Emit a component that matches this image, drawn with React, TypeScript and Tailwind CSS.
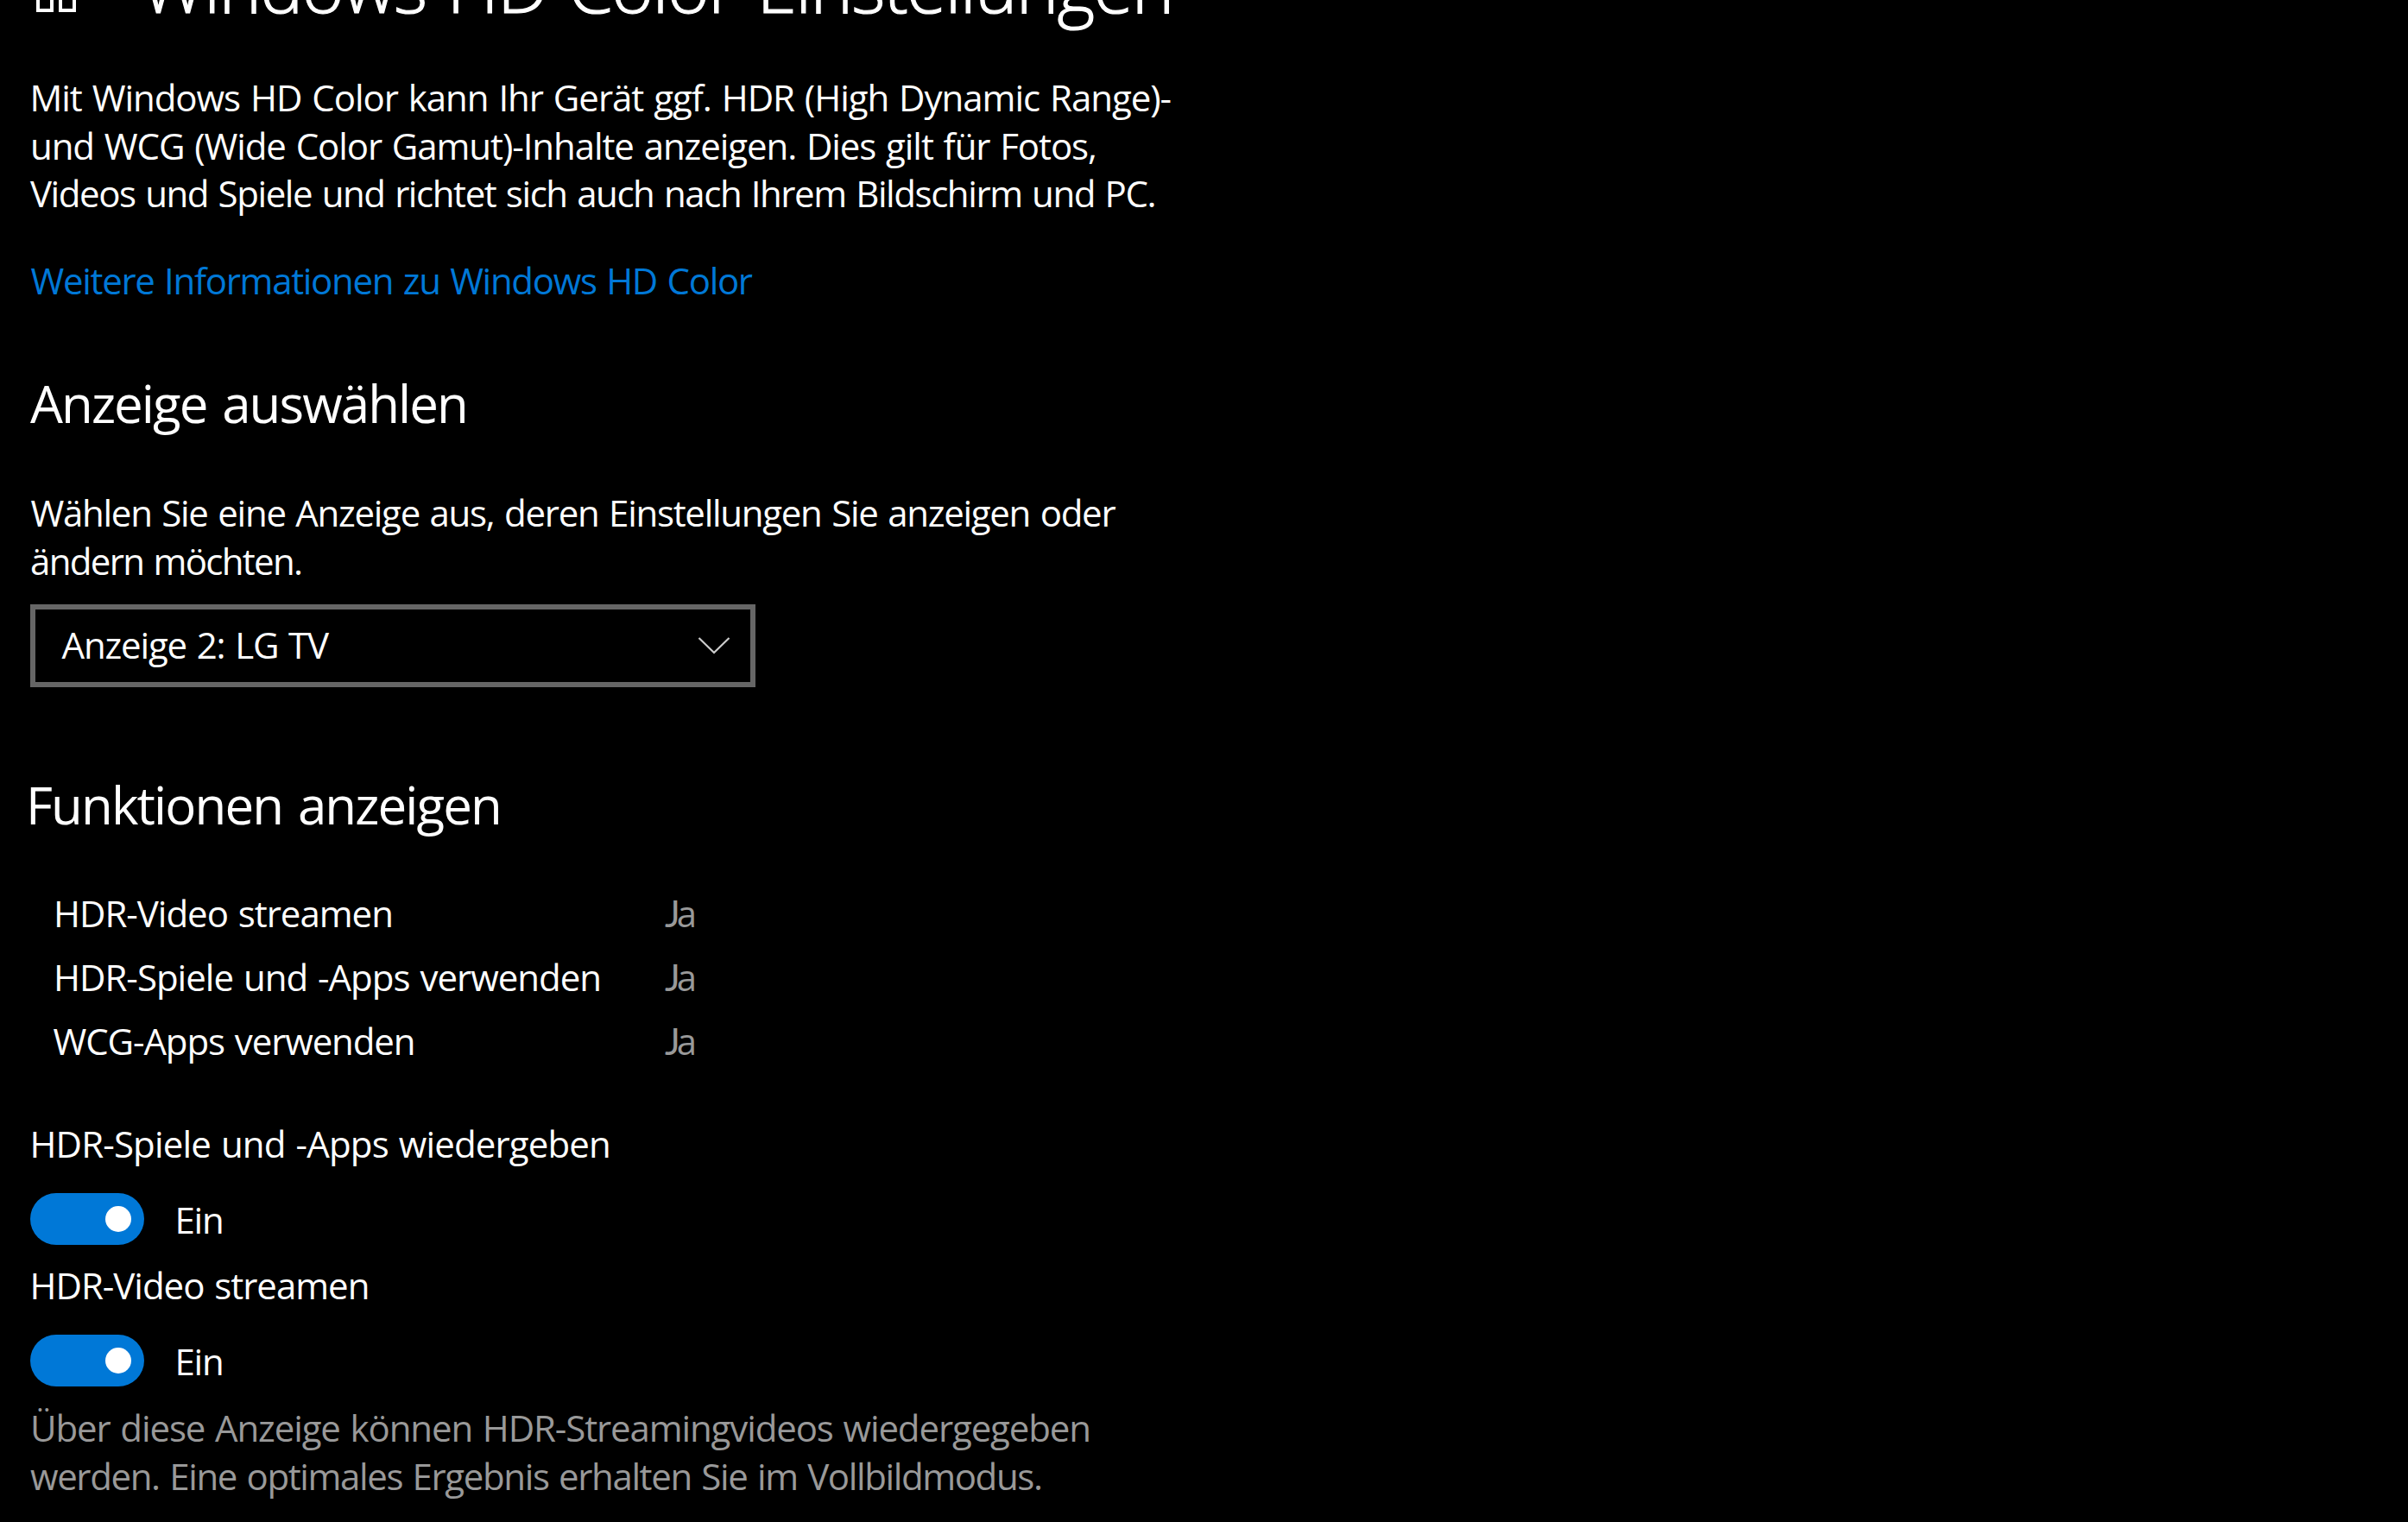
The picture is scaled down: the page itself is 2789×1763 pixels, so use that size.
import React from 'react';

const HomeIcon: React.FC = () => (
  <svg className="w-[60px] h-[60px] shrink-0" viewBox="0 0 60 60" fill="none" stroke="white" strokeWidth="4">
    <path d="M9 28V56H25V34H35V56H51V28" />
    <path d="M3 31L30 4L57 31" />
  </svg>
);

// The J sits on the baseline, so it is set in a different face than the rest
const Yes: React.FC = () => (
  <span className="text-[#999999]">
    <span className="font-['Lato'] -ml-px tracking-[-4px]">J</span>a
  </span>
);

const Toggle: React.FC = () => (
  <div className="flex items-center h-[60px]">
    <button className="w-[132px] h-[60px] rounded-full bg-[#0078d7] flex items-center justify-end pr-[15px]">
      <span className="size-[30px] rounded-full bg-white"></span>
    </button>
    <span className="ml-[35.5px] leading-[60px] pt-px tracking-[-1.22px]">Ein</span>
  </div>
);

const features = [
  { label: 'HDR-Video streamen', className: 'pl-[27px] tracking-[-1.02px]' },
  { label: 'HDR-Spiele und -Apps verwenden', className: 'pl-[27px] tracking-[-1px]' },
  { label: 'WCG-Apps verwenden', className: 'pl-[26.5px] tracking-[-1.1px]' },
];

export default function App() {
  return (
    <main className="w-full h-[1763px] overflow-hidden bg-black text-white pl-[35px] font-['Open_Sans',sans-serif] text-[42px] leading-[55.5px] [word-spacing:2px] whitespace-nowrap">
      {/* Page header, scrolled partly out of view */}
      <header className="flex items-center h-[112px] -mt-[73px]">
        <div className="w-[128px] h-full pt-[29px]">
          <HomeIcon />
        </div>
        <h1 className="text-[84px] leading-[112px] font-light tracking-[-1.75px] [word-spacing:4px] [-webkit-text-stroke:1.2px_white]">
          Windows HD Color-Einstellungen
        </h1>
      </header>

      {/* Intro */}
      <div className="mt-[46px]">
        <p className="-ml-[0.5px] tracking-[-1.03px]">
          Mit Windows HD Color kann Ihr Gerät ggf. HDR (High Dynamic Range)-
        </p>
        <p className="tracking-[-1.08px]">
          und WCG (Wide Color Gamut)-Inhalte anzeigen. Dies gilt für Fotos,
        </p>
        <p className="tracking-[-1.42px]">
          Videos und Spiele und richtet sich auch nach Ihrem Bildschirm und PC.
        </p>
      </div>
      <a href="#info" className="block mt-[45.5px] ml-[0.5px] text-[#0078d7] tracking-[-1.32px]">
        Weitere Informationen zu Windows HD Color
      </a>

      {/* Display picker */}
      <h2 className="mt-[74.5px] text-[60px] leading-[80px] tracking-[-1.92px] [word-spacing:4px]">Anzeige auswählen</h2>
      <div className="mt-[59px]">
        <p className="ml-[0.5px] tracking-[-1.28px]">
          Wählen Sie eine Anzeige aus, deren Einstellungen Sie anzeigen oder
        </p>
        <p className="tracking-[-1.68px]">ändern möchten.</p>
      </div>
      <button className="mt-[23px] w-[840px] h-[96px] border-6 border-[#666666] flex items-center justify-between pl-[30.5px] pr-[23px]">
        <span className="pb-[3px] tracking-[-1.16px] [word-spacing:2px]">Anzeige 2: LG TV</span>
        <svg className="w-[38px] h-[20px]" viewBox="0 0 38 20" fill="none" stroke="#cccccc" strokeWidth="2.2">
          <path d="M1.5 1L19 18L36.5 1" />
        </svg>
      </button>

      {/* Display capabilities */}
      <h2 className="mt-[96px] -ml-[5px] text-[60px] leading-[80px] tracking-[-1.88px] [word-spacing:4px]">Funktionen anzeigen</h2>
      <div className="mt-[49px]">
        {features.map((feature) => (
          <div key={feature.label} className="flex leading-[74px]">
            <span className="w-[736px]">
              <span className={feature.className}>{feature.label}</span>
            </span>
            <Yes />
          </div>
        ))}
      </div>

      {/* Switches */}
      <p className="mt-[54px] -ml-[0.5px] tracking-[-0.86px]">HDR-Spiele und -Apps wiedergeben</p>
      <div className="mt-[29.5px]">
        <Toggle />
      </div>
      <p className="mt-[19px] -ml-[0.5px] tracking-[-1.02px]">HDR-Video streamen</p>
      <div className="mt-[29.5px]">
        <Toggle />
      </div>
      <div className="mt-[20px] text-[#999999]">
        <p className="tracking-[-1.12px]">
          Über diese Anzeige können HDR-Streamingvideos wiedergegeben
        </p>
        <p className="tracking-[-1.38px]">
          werden. Eine optimales Ergebnis erhalten Sie im Vollbildmodus.
        </p>
      </div>
    </main>
  );
}
